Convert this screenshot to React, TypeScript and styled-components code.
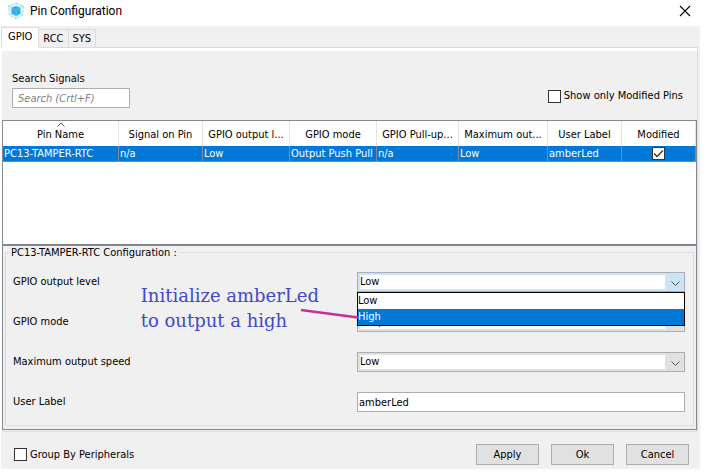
import React from 'react';
import styled, { createGlobalStyle } from 'styled-components';

const blue = '#0078d7';
const face = '#f0f0f0';
const line = '#dcdcdc';
const frame = '#828790';
const controlLine = '#abadb3';

const GlobalStyle = createGlobalStyle`
  * { box-sizing: border-box; }
  body { margin: 0; background: #fff; }
  body, button, input, select {
    font-family: "DejaVu Sans Condensed", "Noto Sans", sans-serif;
    font-size: 11px;
    line-height: 14px;
    color: #000;
  }
`;

const Dialog = styled.main`
  display: flex;
  flex-direction: column;
  min-height: 100vh;
  padding: 0 5px 5px 1px;
`;

const TitleBar = styled.header`
  display: flex;
  align-items: center;
  gap: 5px;
  height: 26px;
  padding: 0 9px 5px 6px;
`;

const Title = styled.h1`
  flex: 1;
  margin: 0;
  font-family: Roboto, sans-serif;
  font-size: 12px;
  font-weight: 400;
  line-height: 16px;
`;

const CloseButton = styled.button`
  display: flex;
  padding: 0;
  border: 0;
  background: none;
`;

const Body = styled.div`
  display: flex;
  flex: 1;
  flex-direction: column;
  background: ${face};
`;

const TabList = styled.div`
  display: flex;
  align-items: flex-end;
  height: 22px;
  margin-right: 2px;
  padding-top: 1px;
  box-shadow: inset 0 -1px ${line};
`;

const Tab = styled.button<{ $active?: boolean }>`
  height: ${p => (p.$active ? 21 : 19)}px;
  padding: ${p => (p.$active ? '0 6px 1px' : '1px 4px 0')};
  border: 1px solid ${line};
  border-left-width: ${p => (p.$active ? 1 : 0)}px;
  border-bottom-color: ${p => (p.$active ? '#fff' : line)};
  background: ${p => (p.$active ? '#fff' : face)};
`;

const Page = styled.section`
  display: flex;
  flex: 1;
  flex-direction: column;
  margin-right: 2px;
  padding: 3px 0 1px;
  border-right: 1px solid ${line};
  border-bottom: 1px solid ${line};
  border-left: 1px solid #fff;
  background: linear-gradient(#fff, #fff) 0 0 / 100% 3px no-repeat;
`;

const SearchBar = styled.div`
  display: flex;
  align-items: flex-end;
  justify-content: space-between;
  height: 69px;
  padding: 0 14px 12px 10px;
`;

const SearchField = styled.div`
  display: flex;
  flex-direction: column;
  gap: 2px;
`;

const TextInput = styled.input<{ $search?: boolean }>`
  width: ${p => (p.$search ? '118px' : '100%')};
  height: 20px;
  padding: 0 ${p => (p.$search ? 5 : 1)}px;
  border: 1px solid ${controlLine};
  border-radius: 0;
  background: #fff;
  &::placeholder { color: #808080; font-style: italic; opacity: 1; }
`;

const CheckLabel = styled.label<{ $raised?: boolean }>`
  display: flex;
  align-items: center;
  gap: 3px;
  padding-bottom: ${p => (p.$raised ? 5 : 0)}px;
`;

const CheckBox = styled.input.attrs({ type: 'checkbox' })`
  appearance: none;
  display: block;
  width: 13px;
  height: 13px;
  margin: 0;
  border: 1px solid #333;
  background: #fff;
  &:checked {
    background: #fff url("data:image/svg+xml,%3Csvg xmlns='http://www.w3.org/2000/svg' viewBox='0 0 11 11'%3E%3Cpath d='M1 5.5 4 8.5 10 2.5' fill='none' stroke='%23333' stroke-width='1.3'/%3E%3C/svg%3E");
  }
`;

const TableView = styled.div`
  flex: 1;
  min-height: 60px;
  border: 1px solid ${frame};
  border-bottom-width: 2px;
  background: #fff;
`;

const PinTable = styled.table`
  width: 100%;
  table-layout: fixed;
  border-collapse: separate;
  border-spacing: 0;
`;

const HeadCell = styled.th`
  position: relative;
  height: 25px;
  padding: 2px 2px 0;
  border-right: 1px solid #e5e5e5;
  font-weight: 400;
  text-align: center;
  white-space: nowrap;
`;

const SortMark = styled.svg`
  position: absolute;
  top: 1px;
  left: calc(50% - 4px);
`;

const Cell = styled.td`
  height: 16px;
  padding: 0 0 0 1px;
  border-right: 1px solid ${frame};
  border-bottom: 1px solid ${frame};
  background: ${blue};
  color: #fff;
  white-space: nowrap;
  ${CheckBox} { margin: 0 auto; }
`;

const ConfigPanel = styled.div`
  padding: 0 2px 3px;
  border: 1px solid ${frame};
  border-top: 0;
`;

const Group = styled.fieldset`
  display: block;
  min-width: 0;
  margin: 0;
  padding: 13px 8px 13px 7px;
  border: 1px solid ${line};
`;

const Legend = styled.legend`
  margin-left: -3px;
  padding: 0 2px 0 1px;
  line-height: 13px;
`;

const Fields = styled.div`
  display: grid;
  gap: 20px;
`;

const Field = styled.div`
  display: grid;
  grid-template-columns: 344fr 328fr;
  align-items: center;
`;

const Control = styled.div`
  position: relative;
  height: 20px;
`;

const Combo = styled.select<{ $open?: boolean }>`
  appearance: none;
  display: block;
  width: 100%;
  height: 20px;
  padding: 0 22px 0 2px;
  border: 1px solid ${controlLine};
  border-radius: 0;
  background: linear-gradient(#fff, #fff) 2px 2px / calc(100% - 21px) 14px no-repeat
    ${p => (p.$open ? '#cce4f7' : '#e1e1e1')};
`;

const Arrow = styled.svg`
  position: absolute;
  top: 9px;
  right: 5px;
  pointer-events: none;
`;

const Popup = styled.ul`
  position: absolute;
  z-index: 2;
  top: 20px;
  left: 0;
  width: 100%;
  margin: 0;
  padding: 0;
  border: 1px solid #000;
  background: #fff;
  list-style: none;
`;

const Option = styled.li<{ $selected?: boolean }>`
  height: 16px;
  line-height: 16px;
  background: ${p => (p.$selected ? blue : '#fff')};
  color: ${p => (p.$selected ? '#fff' : '#000')};
`;

const Note = styled.p`
  position: absolute;
  z-index: 3;
  top: 11px;
  right: calc(100% + 38px);
  margin: 0;
  color: #3f48cc;
  font-family: "DejaVu Serif", "Liberation Serif", serif;
  font-size: 18px;
  line-height: 25px;
  white-space: nowrap;
`;

const Pointer = styled.svg`
  position: absolute;
  z-index: 3;
  top: 35px;
  right: calc(100% - 2px);
`;

const Footer = styled.footer`
  display: flex;
  align-items: center;
  justify-content: space-between;
  padding: 12px 11px 4px 13px;
`;

const Actions = styled.div`
  display: flex;
  gap: 12px;
`;

const PushButton = styled.button`
  width: 63px;
  height: 21px;
  padding: 0;
  border: 1px solid #adadad;
  background: #e1e1e1;
`;

const columns = [
  { name: 'Pin Name', size: 116 },
  { name: 'Signal on Pin', size: 84 },
  { name: 'GPIO output l...', size: 87 },
  { name: 'GPIO mode', size: 87 },
  { name: 'GPIO Pull-up...', size: 82 },
  { name: 'Maximum out...', size: 89 },
  { name: 'User Label', size: 74 },
  { name: 'Modified', size: 74 },
];
const total = columns.reduce((sum, c) => sum + c.size, 0);
const values = ['PC13-TAMPER-RTC', 'n/a', 'Low', 'Output Push Pull', 'n/a', 'Low', 'amberLed'];

const CubeIcon = () => (
  <svg width="18" height="18" viewBox="0 0 17 18" aria-hidden="true">
    <path d="M8.500 1 16 4 15 13 8.500 17 2 13 1 4Z" fill="#e2f4fc" stroke="#a5dcf4" strokeDasharray="3 1" />
    <path d="M1 4 8.500 7 16 4M8.500 7V17M2 13 8.500 9 15 13" fill="none" stroke="#a5dcf4" />
    <path d="M8.500 4 13 6V11.500L8.500 14 4 11.500V6Z" fill="#2eaee6" />
    <path d="M4 6 8.500 8.500 13 6M8.500 8.500V14" fill="none" stroke="#73cdf2" strokeWidth=".6" />
  </svg>
);

function ComboBox({ id, options, open }: { id: string; options: string[]; open?: boolean }) {
  return (
    <>
      <Combo id={id} $open={open} defaultValue={options[0]}>
        {options.map(o => <option key={o}>{o}</option>)}
      </Combo>
      <Arrow width="9" height="6" viewBox="0 0 9 6" aria-hidden="true">
        <path d="M.5 .5 4.500 4.500 8.500 .5" fill="none" stroke="#555" />
      </Arrow>
    </>
  );
}

export default function App() {
  return (
    <Dialog>
      <GlobalStyle />
      <TitleBar>
        <CubeIcon />
        <Title>Pin Configuration</Title>
        <CloseButton aria-label="Close">
          <svg width="12" height="12" viewBox="0 0 12 12" aria-hidden="true">
            <path d="M1 1 11 11M11 1 1 11" stroke="#000" strokeWidth="1.1" />
          </svg>
        </CloseButton>
      </TitleBar>
      <Body>
        <TabList role="tablist">
          <Tab role="tab" aria-selected="true" $active>GPIO</Tab>
          <Tab role="tab" aria-selected="false">RCC</Tab>
          <Tab role="tab" aria-selected="false">SYS</Tab>
        </TabList>
        <Page>
          <SearchBar>
            <SearchField>
              <label htmlFor="search">Search Signals</label>
              <TextInput id="search" $search placeholder="Search (Crtl+F)" />
            </SearchField>
            <CheckLabel $raised><CheckBox />Show only Modified Pins</CheckLabel>
          </SearchBar>
          <TableView>
            <PinTable>
              <colgroup>
                {columns.map(c => <col key={c.name} style={{ width: `${(c.size / total) * 100}%` }} />)}
              </colgroup>
              <thead>
                <tr>
                  {columns.map((c, i) => (
                    <HeadCell key={c.name} scope="col">
                      {i === 0 && (
                        <SortMark width="8" height="5" viewBox="0 0 8 5" aria-hidden="true">
                          <path d="M.5 4.500 4 1 7.500 4.500" fill="none" stroke="#555" />
                        </SortMark>
                      )}
                      {c.name}
                    </HeadCell>
                  ))}
                </tr>
              </thead>
              <tbody>
                <tr>
                  {values.map((v, i) => <Cell key={i}>{v}</Cell>)}
                  <Cell><CheckBox defaultChecked aria-label="Modified" /></Cell>
                </tr>
              </tbody>
            </PinTable>
          </TableView>
          <ConfigPanel>
            <Group>
              <Legend>PC13-TAMPER-RTC Configuration :</Legend>
              <Fields>
                <Field>
                  <label htmlFor="level">GPIO output level</label>
                  <Control>
                    <ComboBox id="level" options={['Low', 'High']} open />
                    <Popup role="listbox" aria-label="GPIO output level">
                      <Option role="option" aria-selected="false">Low</Option>
                      <Option role="option" aria-selected="true" $selected>High</Option>
                    </Popup>
                    <Note>Initialize amberLed<br />to output a high</Note>
                    <Pointer width="59" height="14" viewBox="0 0 59 14" aria-hidden="true">
                      <path d="M1 3 58 10.500" stroke="#c3309f" strokeWidth="2.600" />
                    </Pointer>
                  </Control>
                </Field>
                <Field>
                  <label htmlFor="mode">GPIO mode</label>
                  <Control><ComboBox id="mode" options={['Output Push Pull']} /></Control>
                </Field>
                <Field>
                  <label htmlFor="speed">Maximum output speed</label>
                  <Control><ComboBox id="speed" options={['Low']} /></Control>
                </Field>
                <Field>
                  <label htmlFor="user-label">User Label</label>
                  <Control><TextInput id="user-label" defaultValue="amberLed" /></Control>
                </Field>
              </Fields>
            </Group>
          </ConfigPanel>
        </Page>
        <Footer>
          <CheckLabel><CheckBox />Group By Peripherals</CheckLabel>
          <Actions>
            <PushButton>Apply</PushButton>
            <PushButton>Ok</PushButton>
            <PushButton>Cancel</PushButton>
          </Actions>
        </Footer>
      </Body>
    </Dialog>
  );
}
